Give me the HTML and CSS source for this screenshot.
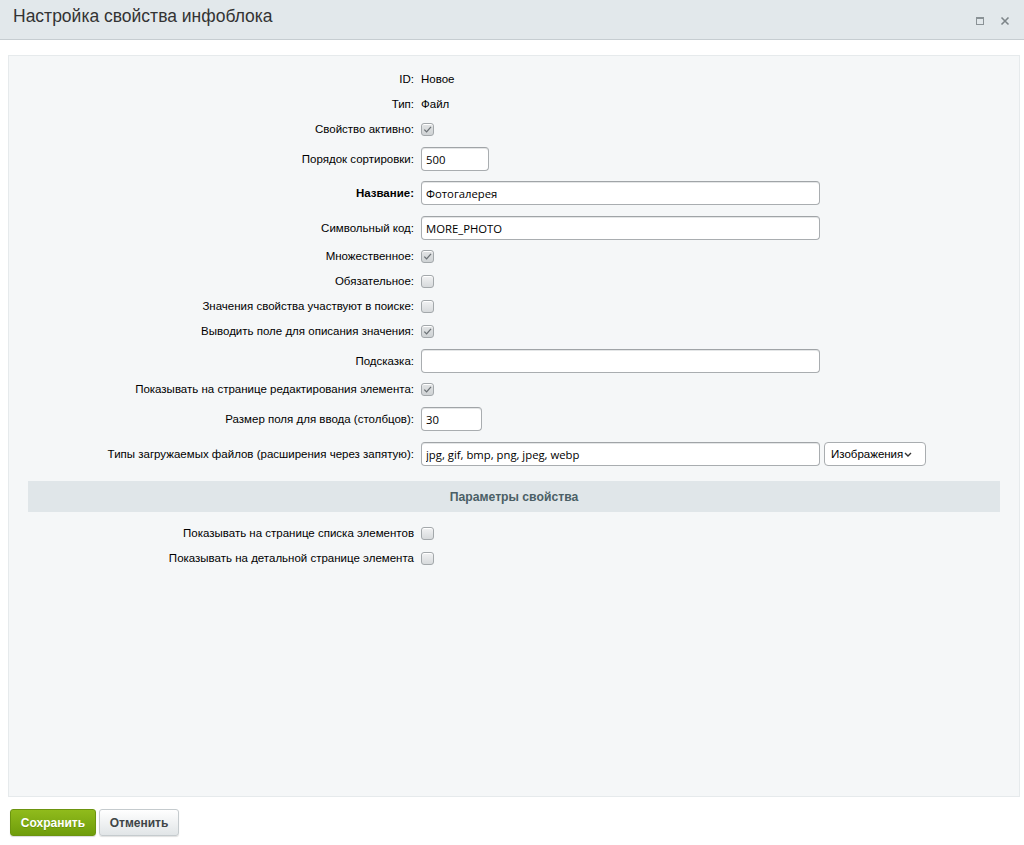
FILE: index.html
```html
<!DOCTYPE html>
<html lang="ru">
<head>
<meta charset="utf-8">
<title>Настройка свойства инфоблока</title>
<link rel="stylesheet" href="styles.css">
</head>
<body>
<div class="dialog">
  <div class="dialog-head">
    <div class="dialog-title">Настройка свойства инфоблока</div>
    <div class="dialog-tools">
      <svg class="tool" width="9" height="9" viewBox="0 0 9 9"><rect x="0.5" y="1.5" width="7" height="7" fill="none" stroke="#8a9296" stroke-width="1"/><line x1="0.5" y1="2" x2="7.5" y2="2" stroke="#8a9296" stroke-width="2"/></svg>
      <svg class="tool" width="10" height="10" viewBox="0 0 10 10"><path d="M1.5 1.5 L8.5 8.5 M8.5 1.5 L1.5 8.5" stroke="#7d8589" stroke-width="1.6" fill="none"/></svg>
    </div>
  </div>

  <div class="panel">
    <div class="row"><div class="label">ID:</div><div class="value">Новое</div></div>
    <div class="row"><div class="label">Тип:</div><div class="value">Файл</div></div>
    <div class="row"><div class="label">Свойство активно:</div><div class="value"><span class="cb checked"><svg viewBox="0 0 13 13"><path d="M3.3 6.6 L5.6 8.9 L10 3.9" fill="none" stroke="#6b7175" stroke-width="1.3"/></svg></span></div></div>
    <div class="row input-row"><div class="label">Порядок сортировки:</div><div class="value"><input class="text w-sort" type="text" value="500"></div></div>
    <div class="row input-row pt-6"><div class="label bold">Название:</div><div class="value"><input class="text w-wide" type="text" value="Фотогалерея"></div></div>
    <div class="row input-row pt-7"><div class="label">Символьный код:</div><div class="value"><input class="text w-wide" type="text" value="MORE_PHOTO"></div></div>
    <div class="row"><div class="label">Множественное:</div><div class="value"><span class="cb checked"><svg viewBox="0 0 13 13"><path d="M3.3 6.6 L5.6 8.9 L10 3.9" fill="none" stroke="#6b7175" stroke-width="1.3"/></svg></span></div></div>
    <div class="row"><div class="label">Обязательное:</div><div class="value"><span class="cb"></span></div></div>
    <div class="row"><div class="label">Значения свойства участвуют в поиске:</div><div class="value"><span class="cb"></span></div></div>
    <div class="row"><div class="label">Выводить поле для описания значения:</div><div class="value"><span class="cb checked"><svg viewBox="0 0 13 13"><path d="M3.3 6.6 L5.6 8.9 L10 3.9" fill="none" stroke="#6b7175" stroke-width="1.3"/></svg></span></div></div>
    <div class="row input-row"><div class="label">Подсказка:</div><div class="value"><input class="text w-wide" type="text" value=""></div></div>
    <div class="row"><div class="label">Показывать на странице редактирования элемента:</div><div class="value"><span class="cb checked"><svg viewBox="0 0 13 13"><path d="M3.3 6.6 L5.6 8.9 L10 3.9" fill="none" stroke="#6b7175" stroke-width="1.3"/></svg></span></div></div>
    <div class="row input-row"><div class="label">Размер поля для ввода (столбцов):</div><div class="value"><input class="text w-size" type="text" value="30"></div></div>
    <div class="row input-row pt-7"><div class="label">Типы загружаемых файлов (расширения через запятую):</div><div class="value"><input class="text w-wide" type="text" value="jpg, gif, bmp, png, jpeg, webp"><div class="select">Изображения<svg width="8" height="5" viewBox="0 0 8 5"><path d="M1 1 L4 4 L7 1" fill="none" stroke="#333" stroke-width="1.4"/></svg></div></div></div>

    <div class="section-head">Параметры свойства</div>

    <div class="row"><div class="label">Показывать на странице списка элементов</div><div class="value"><span class="cb"></span></div></div>
    <div class="row"><div class="label">Показывать на детальной странице элемента</div><div class="value"><span class="cb"></span></div></div>
  </div>

  <div class="buttons">
    <button class="btn btn-save" type="button">Сохранить</button>
    <button class="btn btn-cancel" type="button">Отменить</button>
  </div>
</div>
</body>
</html>
```

FILE: styles.css
```css
html, body {
  margin: 0;
  padding: 0;
  background: #ffffff;
}

body {
  font-family: "Liberation Sans", Arial, Helvetica, sans-serif;
  font-size: 11.5px;
  color: #000;
}

.dialog {
  width: 1024px;
  height: 845px;
  display: flex;
  flex-direction: column;
}

.dialog-head {
  height: 40px;
  box-sizing: border-box;
  background: #e2e8eb;
  border-bottom: 1px solid #c6cdd1;
  display: flex;
  align-items: center;
  justify-content: space-between;
  padding: 0 14px 0 13px;
}

.dialog-title {
  font-size: 17.5px;
  color: #333;
  margin-top: -7px;
}

.dialog-tools {
  display: flex;
  align-items: center;
  gap: 15px;
  margin-top: 2px;
}

.panel {
  margin: 15px 4px 0 8px;
  height: 742px;
  box-sizing: border-box;
  background: #f5f7f8;
  border: 1px solid #e6eaec;
  padding: 11px 0 0;
}

/* form rows: label column right-aligned, control column left-aligned */
.row {
  display: grid;
  grid-template-columns: 405px 1fr;
  column-gap: 7px;
  align-items: center;
  padding: 4px 0;
  min-height: 17px;
}

.row.input-row {
  padding: 5px 0 4px;
}

.row.pt-6 { padding-top: 6px; }
.row.pt-7 { padding-top: 7px; }

.label {
  text-align: right;
  line-height: 17px;
  color: #000;
}

.label.bold {
  font-weight: bold;
}

.value {
  display: flex;
  align-items: center;
  gap: 4px;
  line-height: 17px;
  color: #000;
}

.text {
  box-sizing: border-box;
  height: 24px;
  border: 1px solid #a9adb0;
  border-top-color: #a0a4a7;
  border-radius: 4px;
  background: #fff;
  box-shadow: inset 0 1px 0 #e4e6e7;
  padding: 0 4px;
  font-family: "Open Sans", "Liberation Sans", sans-serif;
  font-size: 11.3px;
  color: #000;
  margin: 0;
  outline: none;
}

.w-sort { width: 68px; }
.w-wide { width: 399px; }
.w-size { width: 61px; }

.select {
  box-sizing: border-box;
  height: 24px;
  width: 102px;
  border: 1px solid #a9adb0;
  border-radius: 4px;
  background: #fff;
  display: flex;
  align-items: center;
  justify-content: space-between;
  padding: 0 13px 0 6px;
  font-size: 11.5px;
  color: #000;
}

.cb {
  display: inline-block;
  box-sizing: border-box;
  width: 13px;
  height: 13px;
  border: 1px solid #a3a8ab;
  border-radius: 3px;
  background: linear-gradient(#f1f2f3, #d7dadc);
  box-shadow: inset 0 1px 0 #fff;
  position: relative;
}

.cb.checked {
  background: linear-gradient(#e2e4e5, #cfd3d5);
}

.cb svg {
  position: absolute;
  left: -1px;
  top: -1px;
  width: 13px;
  height: 13px;
}

.section-head {
  margin: 11px 19px 9px 19px;
  height: 31px;
  background: #e0e6e9;
  display: flex;
  align-items: center;
  justify-content: center;
  font-weight: bold;
  font-size: 12.2px;
  color: #4b5f66;
}

.buttons {
  display: flex;
  gap: 3px;
  padding: 12px 0 0 10px;
}

.btn {
  height: 27px;
  box-sizing: border-box;
  border-radius: 3px;
  font-family: "Liberation Sans", Arial, sans-serif;
  font-weight: bold;
  font-size: 12px;
  padding: 0;
  cursor: pointer;
}

.btn-save {
  width: 86px;
  border: 1px solid #6c9410;
  background: linear-gradient(#90bb1c, #6f9d0b);
  color: #fff;
  text-shadow: 0 1px 0 rgba(0, 0, 0, 0.15);
  box-shadow: 0 1px 1px rgba(0, 0, 0, 0.15);
}

.btn-cancel {
  width: 80px;
  border: 1px solid #c5cbce;
  background: linear-gradient(#ffffff, #e1e5e7);
  color: #3f4547;
  box-shadow: 0 1px 1px rgba(0, 0, 0, 0.12);
}
```
